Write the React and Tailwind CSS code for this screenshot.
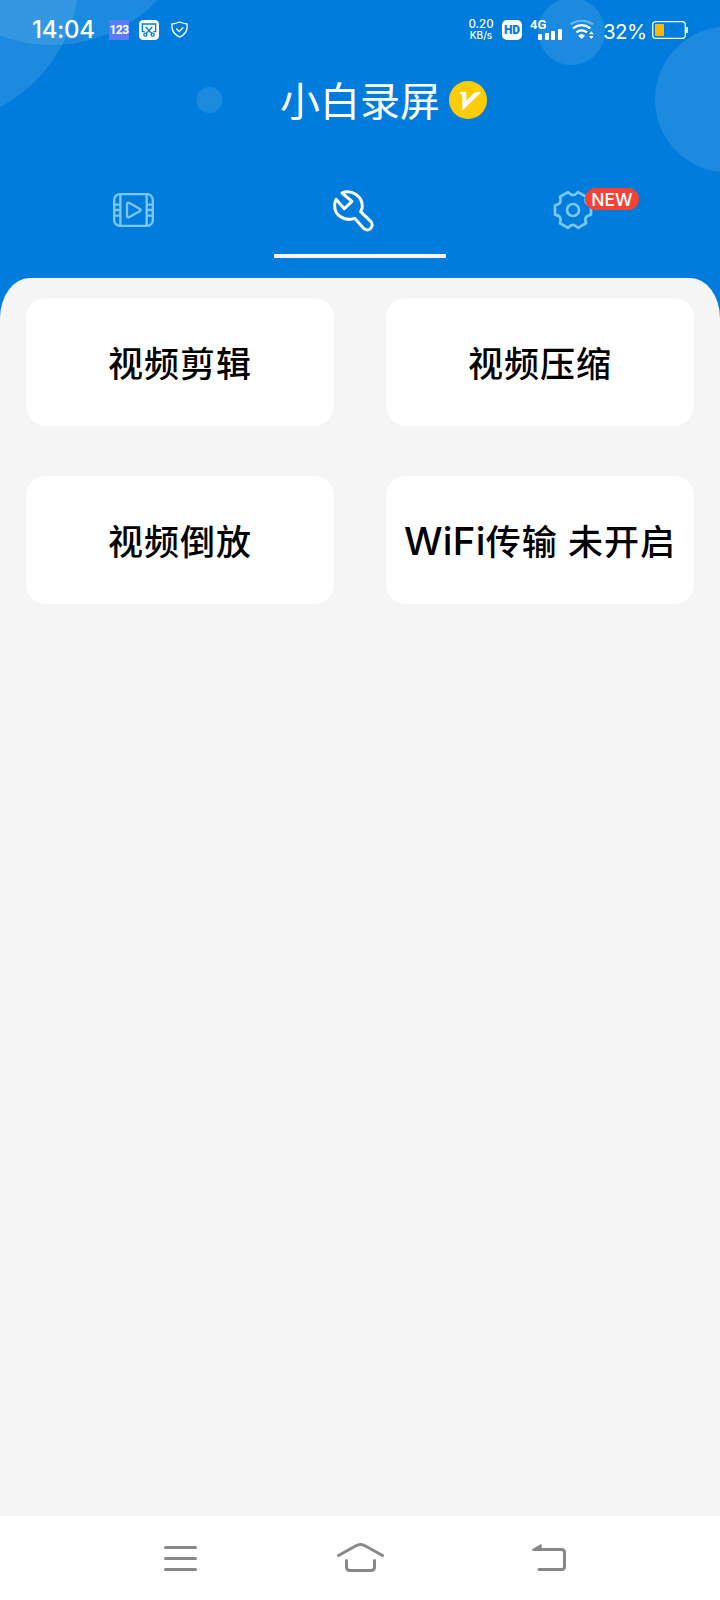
import React, { useState } from "react";

const TOOLS = [
  { name: "视频剪辑" },
  { name: "视频压缩" },
  { name: "视频倒放" },
  { prefix: "WiFi", name: "传输 未开启" },
];

// one notch + one flat tooth, turned six times around the centre
const gearPath = () => {
  const turn = (x, y, k) => {
    const a = (k * Math.PI) / 3;
    return `${(x * Math.cos(a) - y * Math.sin(a)).toFixed(1)} ${(x * Math.sin(a) + y * Math.cos(a)).toFixed(1)}`;
  };
  let d = `M${turn(-54, 14, 0)}`;
  for (let k = 0; k < 6; k++) {
    d += `L${turn(-54, -14, k)}C${turn(-38, -18, k)} ${turn(-34, -24, k)} ${turn(-54, 14, k + 1)}`;
  }
  return d + "Z";
};

const FilmIcon = () => (
  <svg className="h-[34px] w-[41px] text-[#7cc6fb]" viewBox="0 0 123 102" fill="none" stroke="currentColor" strokeWidth="7">
    <rect x="3.5" y="3.5" width="116" height="95" rx="17" />
    <path d="M22 3v96M101 3v96M3 35h19M3 51h19M3 68h19M101 35h19M101 51h19M101 68h19" />
    <path d="M42 34v34q0 8 7 4l31-17q6-4 0-8L49 30q-7-4-7 4Z" strokeLinejoin="round" />
  </svg>
);

const WrenchIcon = () => (
  <svg className="h-[47px] w-[47px] text-white" viewBox="0 0 141 141" fill="none" stroke="currentColor" strokeWidth="9" strokeLinejoin="round">
    <path d="M18 37L43 65L66 43L36 18C64 6 97 27 97 58C97 64 95 69 92 74L122 103C135 117 117 137 102 125L74 94C46 104 14 87 14 57C14 50 15 43 18 37Z" />
  </svg>
);

const GearIcon = () => (
  <svg className="h-10 w-10 text-[#7cc6fb]" viewBox="-60 -60 120 120" fill="none" stroke="currentColor" strokeWidth="8" strokeLinejoin="round">
    <path d={gearPath()} />
    <circle r="18" />
  </svg>
);

const Bubbles = () => (
  <svg className="absolute inset-0 h-[320px] w-full" viewBox="0 0 720 320" fill="#fff" fillOpacity="0.11">
    <circle cx="52" cy="-102" r="147" />
    <circle cx="-68.5" cy="-23.5" r="147.4" />
    <circle cx="571.5" cy="31.5" r="33.5" />
    <circle cx="728" cy="99.5" r="73" />
    <circle cx="209.5" cy="100" r="13" />
  </svg>
);

const StatusBar = () => (
  <div className="flex h-[59px] items-center pl-8 pr-8 font-['Inter',sans-serif] text-white">
    <span className="w-[77px] text-[24px] font-medium leading-none tracking-[-0.3px]">14:04</span>
    <div className="flex h-5 w-5 items-center justify-center bg-[#5b7cfa] font-['Roboto'] text-[12px] font-bold leading-none tracking-[-0.5px]">123</div>
    <svg className="ml-[10px] h-5 w-5" viewBox="0 0 60 60">
      <rect width="60" height="60" rx="13" fill="#fff" />
      <g fill="none" stroke="#007ddc" strokeWidth="4">
        <path d="M17 35h-7V12h40v23h-7" />
        <path d="M20 21l19 20M40 21L21 41" />
        <circle cx="19" cy="44" r="4.5" />
        <circle cx="41" cy="44" r="4.5" />
      </g>
    </svg>
    <svg className="ml-3 h-[17px] w-[17px]" viewBox="0 0 51 51" fill="none" stroke="#fff" strokeWidth="4" strokeLinejoin="round" strokeLinecap="round">
      <path d="M26 3Q15 8 3 9Q0 37 26 48Q52 37 48 9Q37 8 26 3Z" />
      <path d="M17 24l8 8 11-12" />
    </svg>

    <div className="ml-auto flex w-[26px] flex-col items-center text-[11.5px] font-medium leading-[10.5px]">
      <span>0.20</span>
      <span className="text-[10px]">KB/s</span>
    </div>
    <div className="ml-2 flex h-5 w-5 items-center justify-center rounded-[5px] bg-white font-['Roboto'] text-[12px] font-black leading-none text-[#007ddc]">HD</div>
    <div className="ml-2 flex h-5 w-8 flex-col">
      <span className="h-[9px] font-['Roboto'] text-[13px] font-bold leading-[9px]">4G</span>
      <div className="flex h-[11px] items-end gap-[2.5px] pl-2">
        <i className="h-1.5 w-[4.5px] rounded-[1px] bg-white" />
        <i className="h-[7px] w-[4.5px] rounded-[1px] bg-white" />
        <i className="h-[9px] w-[4.5px] rounded-[1px] bg-white" />
        <i className="h-[11px] w-[4.5px] rounded-[1px] bg-white" />
      </div>
    </div>
    <svg className="ml-2 h-5 w-6" viewBox="0 0 72 60" fill="none" stroke="#fff" strokeWidth="7">
      <path d="M1 13Q34-9 69 13" strokeOpacity="0.35" />
      <path d="M9 25Q35 6 61 25" />
      <path d="M19 37Q35 25 51 37" />
      <path d="M25 47q10-8 20 0L35 57Z" fill="#fff" stroke="none" />
      <path d="M57 43l7-9 7 9ZM57 48l7 9 7-9Z" fill="#fff" stroke="none" />
    </svg>
    <span className="ml-[9px] mt-[5px] w-[46px] text-[20.5px] leading-none tracking-[-0.6px]">32%</span>
    <svg className="ml-[3px] h-[18px] w-9" viewBox="0 0 108 54">
      <rect x="2" y="2" width="98" height="50" rx="10" fill="none" stroke="#fff" strokeWidth="4" />
      <rect x="9" y="9" width="27" height="36" rx="3" fill="#ffb80a" />
      <path d="M105 18v18" stroke="#fff" strokeWidth="5" />
    </svg>
  </div>
);

const NavBar = () => (
  <div className="flex h-[84px] items-center bg-white pl-[163px] pt-0.5">
    <svg className="h-8 w-[35px]" viewBox="0 0 35 32" stroke="#888" strokeWidth="3" strokeLinecap="round">
      <path d="M2.5 4.5h30M2.5 15.5h30M2.5 26.5h30" />
    </svg>
    <svg className="ml-[138px] h-8 w-12" viewBox="0 0 48 32" fill="none" stroke="#888" strokeWidth="3" strokeLinecap="round">
      <path d="M2.5 12.5L20 2.7Q24.5 0.3 29 2.7L46.5 12.5" />
      <path d="M10.500 17.500V24q0 3.500 3.500 3.500h21q3.500 0 3.500-3.500V17.500" />
    </svg>
    <svg className="ml-[148px] h-8 w-[35px]" viewBox="0 0 35 32" fill="none" stroke="#888" strokeWidth="3" strokeLinecap="round">
      <path d="M3 6.5h26.500q3 0 3 3v14q0 3-3 3H7" />
      <path d="M0.5 7L9 2v5Z" fill="#888" strokeWidth="1.5" strokeLinejoin="round" />
    </svg>
  </div>
);

const App = () => {
  const [tab, setTab] = useState(1);

  return (
    <div className="relative flex h-[1600px] w-[720px] flex-col overflow-hidden bg-[#007ddc] font-['Inter','Noto_Sans_CJK_SC',sans-serif]">
      <Bubbles />
      <header className="relative h-[278px]">
        <StatusBar />
        <div className="flex h-[82px] items-center pl-[280px]">
          <h1 className="pt-1 text-[40px] font-normal leading-none text-white">小白录屏</h1>
          <svg className="ml-[9px] h-[38px] w-[38px]" viewBox="0 0 114 114">
            <circle cx="57" cy="57" r="57" fill="#ffcc05" />
            <path d="M32 33h16q4 0 4 5v21l23-22q4-4 9-4h13L40 89V44q0-5-8-6Z" fill="#fff" />
          </svg>
        </div>
        <nav className="flex h-[113px] pl-[23px]">
          <button className="flex h-[138px] w-[220px] items-center justify-center" onClick={() => setTab(0)}>
            <FilmIcon />
          </button>
          <button className="flex h-[138px] w-[220px] items-center justify-center" onClick={() => setTab(1)}>
            <WrenchIcon />
          </button>
          <button className="flex h-[138px] w-[220px] items-center justify-center" onClick={() => setTab(2)}>
            <span className="relative">
              <GearIcon />
              <span className="absolute -top-0.5 left-8 flex h-[22px] w-[54px] items-center justify-center rounded-full bg-[#f44336] pt-px text-[17.5px] font-medium leading-none text-white">
                NEW
              </span>
            </span>
          </button>
        </nav>
        <div
          className="h-1 w-[172px] bg-[#f5f5f5]"
          style={{ marginLeft: 274 + (tab - 1) * 220 }}
        />
      </header>

      <main className="relative flex-1 bg-[#f5f5f5] px-[26px] pt-5 [border-radius:30px_30px_0_0/40px_40px_0_0]">
        <div className="grid grid-cols-2 gap-x-[52px] gap-y-[50px]">
          {TOOLS.map(({ prefix, name }) => (
            <button
              key={name}
              className="flex h-32 items-center justify-center rounded-[20px] bg-white pt-1 text-black"
            >
              <span className="whitespace-pre text-[35px] font-medium leading-[40px] tracking-[1px]">
                {prefix && <span className="text-[38.5px] leading-none tracking-[0.3px]">{prefix}</span>}
                {name}
              </span>
            </button>
          ))}
        </div>
      </main>
      <NavBar />
    </div>
  );
};

export default App;
